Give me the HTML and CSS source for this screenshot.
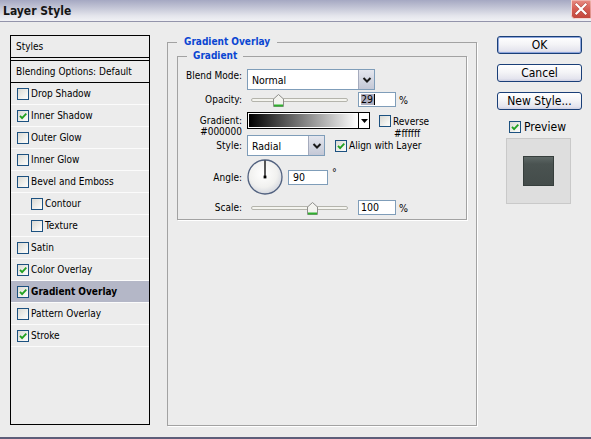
FILE: index.html
```html
<!DOCTYPE html>
<html>
<head>
<meta charset="utf-8">
<title>Layer Style</title>
<link rel="stylesheet" href="styles.css">
</head>
<body>
<div class="window">
  <div class="titlebar">
    <span class="title">Layer Style</span>
    <span class="close">
      <svg width="20" height="19" viewBox="0 0 20 19">
        <defs>
          <linearGradient id="cg" x1="0" y1="0" x2="0" y2="1">
            <stop offset="0" stop-color="#e98d84"/>
            <stop offset="0.5" stop-color="#d55c52"/>
            <stop offset="1" stop-color="#c2463c"/>
          </linearGradient>
        </defs>
        <path d="M0.5 0 H20 V18.5 H3.5 Q0.5 18.5 0.5 15.5 Z" fill="url(#cg)" stroke="#f4d6d2" stroke-width="1"/>
        <path d="M5.5 4.5 L14.5 13.5 M14.5 4.5 L5.5 13.5" stroke="#8a2a24" stroke-width="3.2" stroke-linecap="square" opacity="0.45"/>
        <path d="M5.5 4.5 L14.5 13.5 M14.5 4.5 L5.5 13.5" stroke="#ffffff" stroke-width="2.2" stroke-linecap="square"/>
      </svg>
    </span>
  </div>

  <div class="content">
    <div class="styles-panel">
      <div class="styles-head">Styles</div>
      <div class="blend-row">Blending Options: Default</div>
      <ul class="fx-list">
        <li class="fx"><span class="cb"></span>Drop Shadow</li>
        <li class="fx"><span class="cb on"><svg viewBox="0 0 10 10"><path d="M2 4.8 L4.1 7.2 L8.3 2.6"/></svg></span>Inner Shadow</li>
        <li class="fx"><span class="cb"></span>Outer Glow</li>
        <li class="fx"><span class="cb"></span>Inner Glow</li>
        <li class="fx"><span class="cb"></span>Bevel and Emboss</li>
        <li class="fx sub"><span class="cb"></span>Contour</li>
        <li class="fx sub"><span class="cb"></span>Texture</li>
        <li class="fx"><span class="cb"></span>Satin</li>
        <li class="fx"><span class="cb on"><svg viewBox="0 0 10 10"><path d="M2 4.8 L4.1 7.2 L8.3 2.6"/></svg></span>Color Overlay</li>
        <li class="fx active"><span class="cb on"><svg viewBox="0 0 10 10"><path d="M2 4.8 L4.1 7.2 L8.3 2.6"/></svg></span>Gradient Overlay</li>
        <li class="fx"><span class="cb"></span>Pattern Overlay</li>
        <li class="fx"><span class="cb on"><svg viewBox="0 0 10 10"><path d="M2 4.8 L4.1 7.2 L8.3 2.6"/></svg></span>Stroke</li>
      </ul>
    </div>

    <fieldset class="group outer">
      <legend>Gradient Overlay</legend>
      <fieldset class="group inner">
        <legend>Gradient</legend>
        <div class="gbody">
          <div class="row r-blend">
            <span class="lbl">Blend Mode:</span>
            <div class="select w-blend"><span class="val">Normal</span><span class="arrow"><svg width="10" height="8" viewBox="0 0 10 8"><path d="M1.5 2 L5 5.5 L8.5 2"/></svg></span></div>
          </div>
          <div class="row r-opacity">
            <span class="lbl">Opacity:</span>
            <div class="slider"><span class="track"></span><span class="thumb" style="left:26px"><svg width="11" height="13" viewBox="0 0 11 13"><path class="tb" d="M0.5 5 L5.5 0.5 L10.5 5 V12.5 H0.5 Z"/><path class="tg" d="M1 11.5 H10"/></svg></span></div>
            <span class="num"><span class="sel">29</span><span class="caret"></span></span>
            <span class="unit">%</span>
          </div>
          <div class="row r-grad">
            <span class="lbl two"><span>Gradient:</span><span>#000000</span></span>
            <div class="gradbox"><span class="ramp"></span><span class="drop"><svg width="7" height="4" viewBox="0 0 7 4"><path d="M0 0 H7 L3.5 4 Z"/></svg></span></div>
            <div class="rev">
              <span class="revline"><span class="cb plain"></span>Reverse</span>
              <span class="hex">#ffffff</span>
            </div>
          </div>
          <div class="row r-style">
            <span class="lbl">Style:</span>
            <div class="select w-style"><span class="val">Radial</span><span class="arrow"><svg width="10" height="8" viewBox="0 0 10 8"><path d="M1.5 2 L5 5.5 L8.5 2"/></svg></span></div>
            <span class="align"><span class="cb on"><svg viewBox="0 0 10 10"><path d="M2 4.8 L4.1 7.2 L8.3 2.6"/></svg></span>Align with Layer</span>
          </div>
          <div class="row r-angle">
            <span class="lbl">Angle:</span>
            <svg class="dial" width="36" height="36" viewBox="0 0 36 36">
              <defs>
                <radialGradient id="dg" cx="45%" cy="40%" r="62%">
                  <stop offset="0" stop-color="#ffffff"/>
                  <stop offset="0.65" stop-color="#f1f1ef"/>
                  <stop offset="1" stop-color="#d3d6de"/>
                </radialGradient>
              </defs>
              <circle cx="18" cy="18" r="17" fill="url(#dg)" stroke="#51617f" stroke-width="1.3"/>
              <path d="M18 18 V1.5" stroke="#000" stroke-width="1.3"/>
              <rect x="16.6" y="16.6" width="2.8" height="2.8" fill="#000"/>
            </svg>
            <span class="num w-angle">90</span>
            <span class="deg">°</span>
          </div>
          <div class="row r-scale">
            <span class="lbl">Scale:</span>
            <div class="slider"><span class="track"></span><span class="thumb" style="left:60px"><svg width="11" height="13" viewBox="0 0 11 13"><path class="tb" d="M0.5 5 L5.5 0.5 L10.5 5 V12.5 H0.5 Z"/><path class="tg" d="M1 11.5 H10"/></svg></span></div>
            <span class="num">100</span>
            <span class="unit">%</span>
          </div>
        </div>
      </fieldset>
    </fieldset>

    <div class="actions">
      <button class="btn default">OK</button>
      <button class="btn">Cancel</button>
      <button class="btn">New Style...</button>
      <span class="preview-toggle"><span class="cb on"><svg viewBox="0 0 10 10"><path d="M2 4.8 L4.1 7.2 L8.3 2.6"/></svg></span>Preview</span>
      <div class="preview-box"><span class="swatch"></span></div>
    </div>
  </div>
</div>
</body>
</html>
```

FILE: styles.css
```css
* { box-sizing: border-box; }
html, body { margin: 0; padding: 0; }
body {
  width: 591px;
  height: 439px;
  overflow: hidden;
  background: #ececec;
  font-family: "DejaVu Sans Condensed", "DejaVu Sans", sans-serif;
  font-size: 10px;
  color: #000;
}

.window {
  height: 439px;
  display: flex;
  flex-direction: column;
  border-bottom: 2px solid #5e5e7a;
}

/* title bar */
.titlebar {
  flex: none;
  height: 22px;
  display: flex;
  justify-content: space-between;
  align-items: flex-start;
  background: linear-gradient(#a5a8c2, #c6c8d8 40%, #e4e5ec 75%, #f1f1f5);
  border-bottom: 1px solid #9394ab;
}
.title {
  font-weight: bold;
  font-size: 12px;
  line-height: 14px;
  padding: 4px 0 0 3px;
  color: #151515;
}
.close { width: 20px; height: 19px; display: block; }
.close svg { display: block; }

/* content */
.content {
  flex: 1;
  display: flex;
  align-items: flex-start;
  padding: 13px 0 0 10px;
}

/* left styles list */
.styles-panel {
  flex: none;
  width: 140px;
  height: 390px;
  border: 1px solid #000;
  display: flex;
  flex-direction: column;
}
.styles-head {
  height: 25px;
  line-height: 21px;
  padding-left: 5px;
  border-bottom: 4px double #000;
}
.blend-row {
  height: 22px;
  line-height: 21px;
  padding-left: 5px;
  border-bottom: 1px solid #000;
}
.fx-list { list-style: none; margin: 0; padding: 0; }
.fx {
  height: 22px;
  display: flex;
  align-items: center;
  gap: 2px;
  padding-left: 6px;
  border-bottom: 1px solid #fbfbfb;
}
.fx.sub { padding-left: 20px; }
.fx.active {
  background: #b4b7c7;
  font-weight: bold;
  font-size: 10px;
}

/* checkbox */
.cb {
  flex: none;
  width: 12px;
  height: 12px;
  border: 1px solid #1c5180;
  background: linear-gradient(135deg, #d9d9d3, #f4f4f1 70%, #fbfbfa);
  display: inline-flex;
  align-items: center;
  justify-content: center;
}
.cb svg { width: 10px; height: 10px; display: block; }
.cb svg path { fill: none; stroke: #21a121; stroke-width: 1.8; }

/* group boxes */
.group {
  margin: 0;
  min-width: 0;
  padding: 0;
  border: 1px solid #a2a2a2;
  box-shadow: 1px 1px 0 #fff;
}
.group legend {
  padding: 0 7px;
  line-height: 14px;
  font-weight: bold;
  font-size: 10px;
  color: #0a46d2;
}
.outer {
  flex: none;
  width: 310px;
  height: 391px;
  margin-left: 17px;
  margin-top: 0;
  padding: 0 9px;
}
.outer > legend { margin-left: 0; }
.inner { width: 100%; }
.inner > legend { margin-left: 9px; padding: 0 6px; }

.gbody { padding: 6px 0 4px; }
.row { display: flex; align-items: center; }
.lbl {
  flex: none;
  width: 64px;
  margin-right: 5px;
  text-align: right;
}
.r-blend { height: 21px; }
.r-blend .lbl { align-self: flex-start; line-height: 14px; }
.r-opacity { height: 15px; margin-top: 2px; }
.r-grad { height: 23px; margin-top: 5px; align-items: flex-start; }
.r-style { height: 21px; }
.r-angle { height: 36px; margin-top: 3px; }
.r-scale { height: 15px; margin-top: 5px; }

.lbl.two {
  display: flex;
  flex-direction: column;
  align-items: flex-end;
  line-height: 11px;
  margin-top: 3px;
}

/* select */
.select {
  flex: none;
  display: flex;
  align-items: center;
  height: 21px;
  border: 1px solid #7f9db9;
  background: #fff;
}
.w-blend { width: 128px; }
.w-style { width: 78px; }
.select .val { flex: 1; padding-left: 4px; font-size: 10.5px; }
.select .arrow {
  width: 16px;
  height: 19px;
  display: flex;
  align-items: center;
  justify-content: center;
  background: linear-gradient(#e4e6ee, #c4c8d6);
  border-left: 1px solid #a5abbd;
}
.select .arrow svg path { fill: none; stroke: #1a1a1a; stroke-width: 2; }

/* slider */
.slider {
  flex: none;
  position: relative;
  width: 101px;
  height: 15px;
  margin-right: 10px;
  padding-left: 4px;
  display: flex;
  align-items: center;
}
.track {
  flex: 1;
  height: 4px;
  border: 1px solid #b4b4ac;
  border-radius: 2px;
  background: #f4f4ef;
}
.thumb { position: absolute; top: 2px; width: 11px; height: 13px; }
.thumb svg { display: block; }
.thumb .tb { fill: #f3f3ef; stroke: #8e8e8a; stroke-width: 1; }
.thumb .tg { stroke: #2fb02f; stroke-width: 2; }

/* number inputs */
.num {
  flex: none;
  width: 38px;
  height: 15px;
  border: 1px solid #7f9db9;
  background: #fff;
  padding-left: 2px;
  line-height: 13px;
  display: flex;
  align-items: center;
  font-size: 10.5px;
}
.num .sel { background: #aeaebe; line-height: 11px; padding: 0 1px 0 0; }
.num .caret { width: 1px; height: 11px; background: #000; }
.unit { margin-left: 3px; font-size: 10.5px; }
.w-angle { width: 40px; margin-left: 5px; padding-left: 4px; }
.deg { align-self: flex-start; margin: 7px 0 0 4px; font-size: 10.5px; }

/* gradient box */
.gradbox {
  flex: none;
  width: 123px;
  height: 17px;
  border: 1px solid #000;
  background: #fff;
  display: flex;
}
.ramp {
  flex: 1;
  margin: 1px;
  background: linear-gradient(90deg, #000, #fff);
}
.drop {
  width: 11px;
  border-left: 1px solid #000;
  display: flex;
  align-items: center;
  justify-content: center;
}
.drop svg { display: block; }
.rev {
  display: flex;
  flex-direction: column;
  margin: 3px 0 0 9px;
}
.revline { display: flex; align-items: center; gap: 2px; height: 12px; }
.cb.plain { border-color: #1c5180; }
.hex { line-height: 11px; padding-left: 15px; margin-top: 1px; }

.align { display: flex; align-items: center; gap: 2px; margin-left: 10px; }
.dial { flex: none; display: block; }

/* right actions */
.actions {
  flex: none;
  width: 85px;
  margin: 1px 0 0 20px;
  display: flex;
  flex-direction: column;
}
.btn {
  height: 18px;
  width: 85px;
  margin: 0 0 10px;
  padding: 0;
  border: 1px solid #1a3f78;
  border-radius: 3px;
  background: linear-gradient(#ffffff, #f4f4f7 45%, #e4e4ee 85%, #cfd0e2);
  font-family: "DejaVu Sans Condensed", "DejaVu Sans", sans-serif;
  font-size: 12px;
  line-height: 16px;
  color: #000;
  text-align: center;
}
.btn.default { box-shadow: inset 0 0 0 1px #8ea6dc; }
.preview-toggle {
  display: flex;
  align-items: center;
  gap: 3px;
  height: 13px;
  margin: 0 0 5px 12px;
  font-size: 12px;
}
.preview-box {
  width: 65px;
  height: 66px;
  margin-left: 9px;
  border: 1px solid #c9c9c9;
  background: #dedede;
  display: flex;
  align-items: center;
  justify-content: center;
}
.swatch {
  width: 31px;
  height: 30px;
  border: 1px solid #363e3c;
  background: linear-gradient(#5e6866, #4a5351 25%, #444c4a);
}
```
